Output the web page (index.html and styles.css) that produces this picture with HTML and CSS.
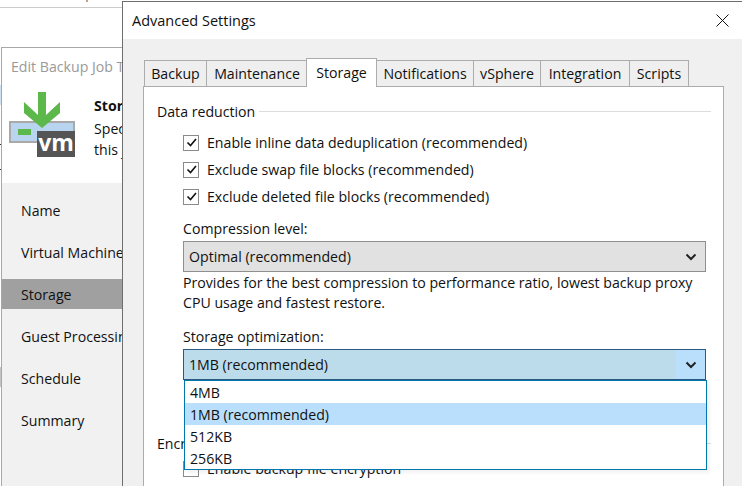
FILE: index.html
```html
<!DOCTYPE html>
<html lang="en">
<head>
<meta charset="utf-8">
<title>Advanced Settings</title>
<link rel="stylesheet" href="styles.css">
</head>
<body>
<div class="desktop">
  <div class="back-line"></div>
  <div class="scrap scrap-top"></div>
  <div class="scrap scrap-blue"></div>
  <div class="scrap scrap-tick1"></div>
  <div class="scrap scrap-tick2"></div>
  <div class="scrap scrap-grey"></div>
  <section class="wizard">
    <div class="wizard-title">Edit Backup Job Test</div>
    <div class="wizard-head">
      <svg class="vm-icon" width="68" height="66" viewBox="0 0 68 66">
        <rect x="1" y="30" width="64" height="20" fill="#b9d4ee" stroke="#a9a9a9" stroke-width="2"/>
        <rect x="9" y="37" width="13" height="6" fill="#5cb84a"/>
        <path d="M29 0h8v23l14-13v11L33 36 15 21V10l14 13z" fill="#5cb84a"/>
        <rect x="28" y="39" width="38" height="26" fill="#555"/>
        <text x="47" y="59" class="vm-text" text-anchor="middle">vm</text>
      </svg>
      <div class="wizard-copy">
        <div class="wizard-heading">Storage</div>
        <div>Specify processing proxy</div>
        <div>this job and customize</div>
      </div>
    </div>
    <nav class="wizard-nav">
      <div class="nav-item">Name</div>
      <div class="nav-item">Virtual Machines</div>
      <div class="nav-item selected">Storage</div>
      <div class="nav-item">Guest Processing</div>
      <div class="nav-item">Schedule</div>
      <div class="nav-item">Summary</div>
    </nav>
  </section>

  <section class="dialog">
    <header class="dialog-title">
      <span>Advanced Settings</span>
      <svg class="close" width="13" height="13" viewBox="0 0 13 13"><path d="M.5.5l12 12M12.500.5l-12 12" stroke="#111" fill="none"/></svg>
    </header>
    <div class="dialog-body">
      <div class="tabs">
        <div class="tab t1">Backup</div>
        <div class="tab t2">Maintenance</div>
        <div class="tab active t3">Storage</div>
        <div class="tab t4">Notifications</div>
        <div class="tab t5">vSphere</div>
        <div class="tab t6">Integration</div>
        <div class="tab t7">Scripts</div>
      </div>
      <div class="panel">
        <div class="group-title"><span>Data reduction</span><i></i></div>
        <div class="checks">
          <label class="check"><span class="box"><svg width="13" height="13" viewBox="0 0 13 13"><path d="M2.500 6.500l3 3 5.500-6.500" fill="none" stroke="#111" stroke-width="1.600"/></svg></span>Enable inline data deduplication (recommended)</label>
          <label class="check"><span class="box"><svg width="13" height="13" viewBox="0 0 13 13"><path d="M2.500 6.500l3 3 5.500-6.500" fill="none" stroke="#111" stroke-width="1.600"/></svg></span>Exclude swap file blocks (recommended)</label>
          <label class="check"><span class="box"><svg width="13" height="13" viewBox="0 0 13 13"><path d="M2.500 6.500l3 3 5.500-6.500" fill="none" stroke="#111" stroke-width="1.600"/></svg></span>Exclude deleted file blocks (recommended)</label>
        </div>
        <div class="field-label first">Compression level:</div>
        <div class="select">
          <span>Optimal (recommended)</span>
          <span class="arrow"><svg width="12" height="8" viewBox="0 0 12 8"><path d="M1.500 1.500L6 6l4.500-4.500" fill="none" stroke="#222" stroke-width="2"/></svg></span>
        </div>
        <p class="help">Provides for the best compression to performance ratio, lowest backup proxy<br>CPU usage and fastest restore.</p>
        <div class="field-label second">Storage optimization:</div>
        <div class="select open">
          <span>1MB (recommended)</span>
          <span class="arrow"><svg width="12" height="8" viewBox="0 0 12 8"><path d="M1.500 1.500L6 6l4.500-4.500" fill="none" stroke="#222" stroke-width="2"/></svg></span>
        </div>
        <div class="group-title encryption"><span>Encryption</span><i></i></div>
        <label class="check enc"><span class="box"></span>Enable backup file encryption</label>
      </div>
    </div>
    <ul class="dropdown">
      <li>4MB</li>
      <li class="hover">1MB (recommended)</li>
      <li>512KB</li>
      <li>256KB</li>
    </ul>
  </section>
</div>
</body>
</html>
```
FILE: styles.css
```css
* { box-sizing: border-box; }
html, body { margin: 0; padding: 0; }
body {
  width: 742px; height: 486px; overflow: hidden; background: #fff;
  font-family: "Open Sans", "Noto Sans", sans-serif; font-size: 14.150px; color: #111;
}
.desktop { position: relative; width: 742px; height: 486px; overflow: hidden; }
.back-line { position: absolute; left: 0; top: 7px; width: 122px; height: 1px; background: #ccc; }
.scrap { position: absolute; left: 0; width: 1px; }
.scrap-top { left: 86px; top: 0; width: 2px; height: 2px; background: #c9a27a; }
.scrap-blue { top: 85px; height: 20px; background: #cfe0f2; }
.scrap-tick1 { top: 144px; height: 1px; background: #333; }
.scrap-tick2 { top: 169px; height: 1px; background: #333; }
.scrap-grey { top: 367px; height: 20px; background: #c4c4c4; }

.wizard {
  position: absolute; left: 1px; top: 47px; width: 130px; height: 460px;
  border: 1px solid #a8a8a8; border-right: 0; background: #fff;
  display: flex; flex-direction: column;
}
.wizard-title { height: 36px; padding: 9px 0 0 9px; color: #9a9a9a; white-space: nowrap; overflow: hidden; }
.wizard-head { height: 99px; display: flex; padding: 8px 0 0 7px; overflow: hidden; }
.vm-icon { flex: none; }
.vm-text { font: 700 23px "Open Sans", sans-serif; fill: #fff; }
.wizard-copy { margin: 3px 0 0 17px; line-height: 21px; white-space: nowrap; }
.wizard-heading { font-weight: 700; margin-bottom: 2px; }
.wizard-nav { flex: 1; background: #f1f1f1; padding-top: 7px; }
.nav-item { height: 42px; padding: 0 0 2px 19px; white-space: nowrap; overflow: hidden; display: flex; align-items: center; }
.nav-item.selected { background: #a0a0a0; height: 30px; margin: 5px 0 7px; padding-bottom: 0; }

.dialog {
  position: absolute; left: 122px; top: 1px; width: 640px; height: 500px;
  border: solid #6e6e6e; border-width: 1px 0 0 1px; background: #f0f0f0;
}
.dialog-title { height: 37px; background: #fff; display: flex; align-items: center; padding: 0 0 0 9px; font-size: 14.500px; position: relative; }
.close { position: absolute; left: 593px; top: 12px; }
.dialog-body { padding: 20px 0 0 20px; }
.tabs { display: flex; height: 27px; align-items: flex-end; position: relative; z-index: 1; }
.tab {
  height: 26px; background: #efefef; border: 1px solid #acacac; border-bottom: 0; margin-right: -1px;
  display: flex; align-items: center; justify-content: center; white-space: nowrap;
}
.tab.active { height: 29px; background: #fff; padding-bottom: 2px; position: relative; top: 1px; z-index: 2; }
.t1 { width: 63px; margin-left: 1px; } .t2 { width: 101px; padding-left: 1px; } .t3 { width: 71px; } .t4 { width: 98px; }
.t5 { width: 68px; } .t6 { width: 90px; } .t7 { width: 60px; }
.panel {
  width: 581px; height: 420px; background: #fff; border: 1px solid #acacac; padding: 14px 12px 0 13px; position: relative;
}
.group-title { display: flex; align-items: center; height: 20px; }
.group-title i { flex: 1; height: 1px; background: #dcdcdc; margin-left: 4px; }
.checks { display: flex; flex-direction: column; margin-top: 8px; }
.check { display: flex; align-items: center; height: 27px; padding-left: 26px; white-space: nowrap; }
.box { width: 16px; height: 16px; border: 1px solid #8a8a8a; background: #fff; margin-right: 8px; display: flex; align-items: center; justify-content: center; flex: none; }
.field-label { padding-left: 26px; height: 20px; display: flex; align-items: center; }
.field-label.first { margin-top: 8px; }
.field-label.second { margin-top: 13px; }
.select {
  margin: 3px 0 0 26px; width: 523px; height: 31px; background: #e1e1e1; border: 1px solid #8f8f8f;
  display: flex; align-items: center; justify-content: space-between; padding-left: 5px;
}
.arrow { width: 29px; height: 29px; display: flex; align-items: center; justify-content: center; }
.select.open { background: #bcdcec; border-color: #2a5a80; }
.select.open .arrow { background: #b9dffc; }
.help { margin: 1px 0 0 26px; line-height: 20px; width: 540px; white-space: nowrap; }
.group-title.encryption { margin-top: 53px; }
.check.enc { margin-top: 2px; }
.dropdown {
  position: absolute; left: 61px; top: 378px; width: 523px; height: 90px; margin: 0; padding: 0;
  list-style: none; background: #fff; border: 1px solid #0078ae; box-shadow: 3px 3px 3px rgba(0,0,0,.05);
}
.dropdown li { height: 22px; line-height: 24px; padding-left: 5px; }
.dropdown li.hover { background: #b9dffc; }
```
